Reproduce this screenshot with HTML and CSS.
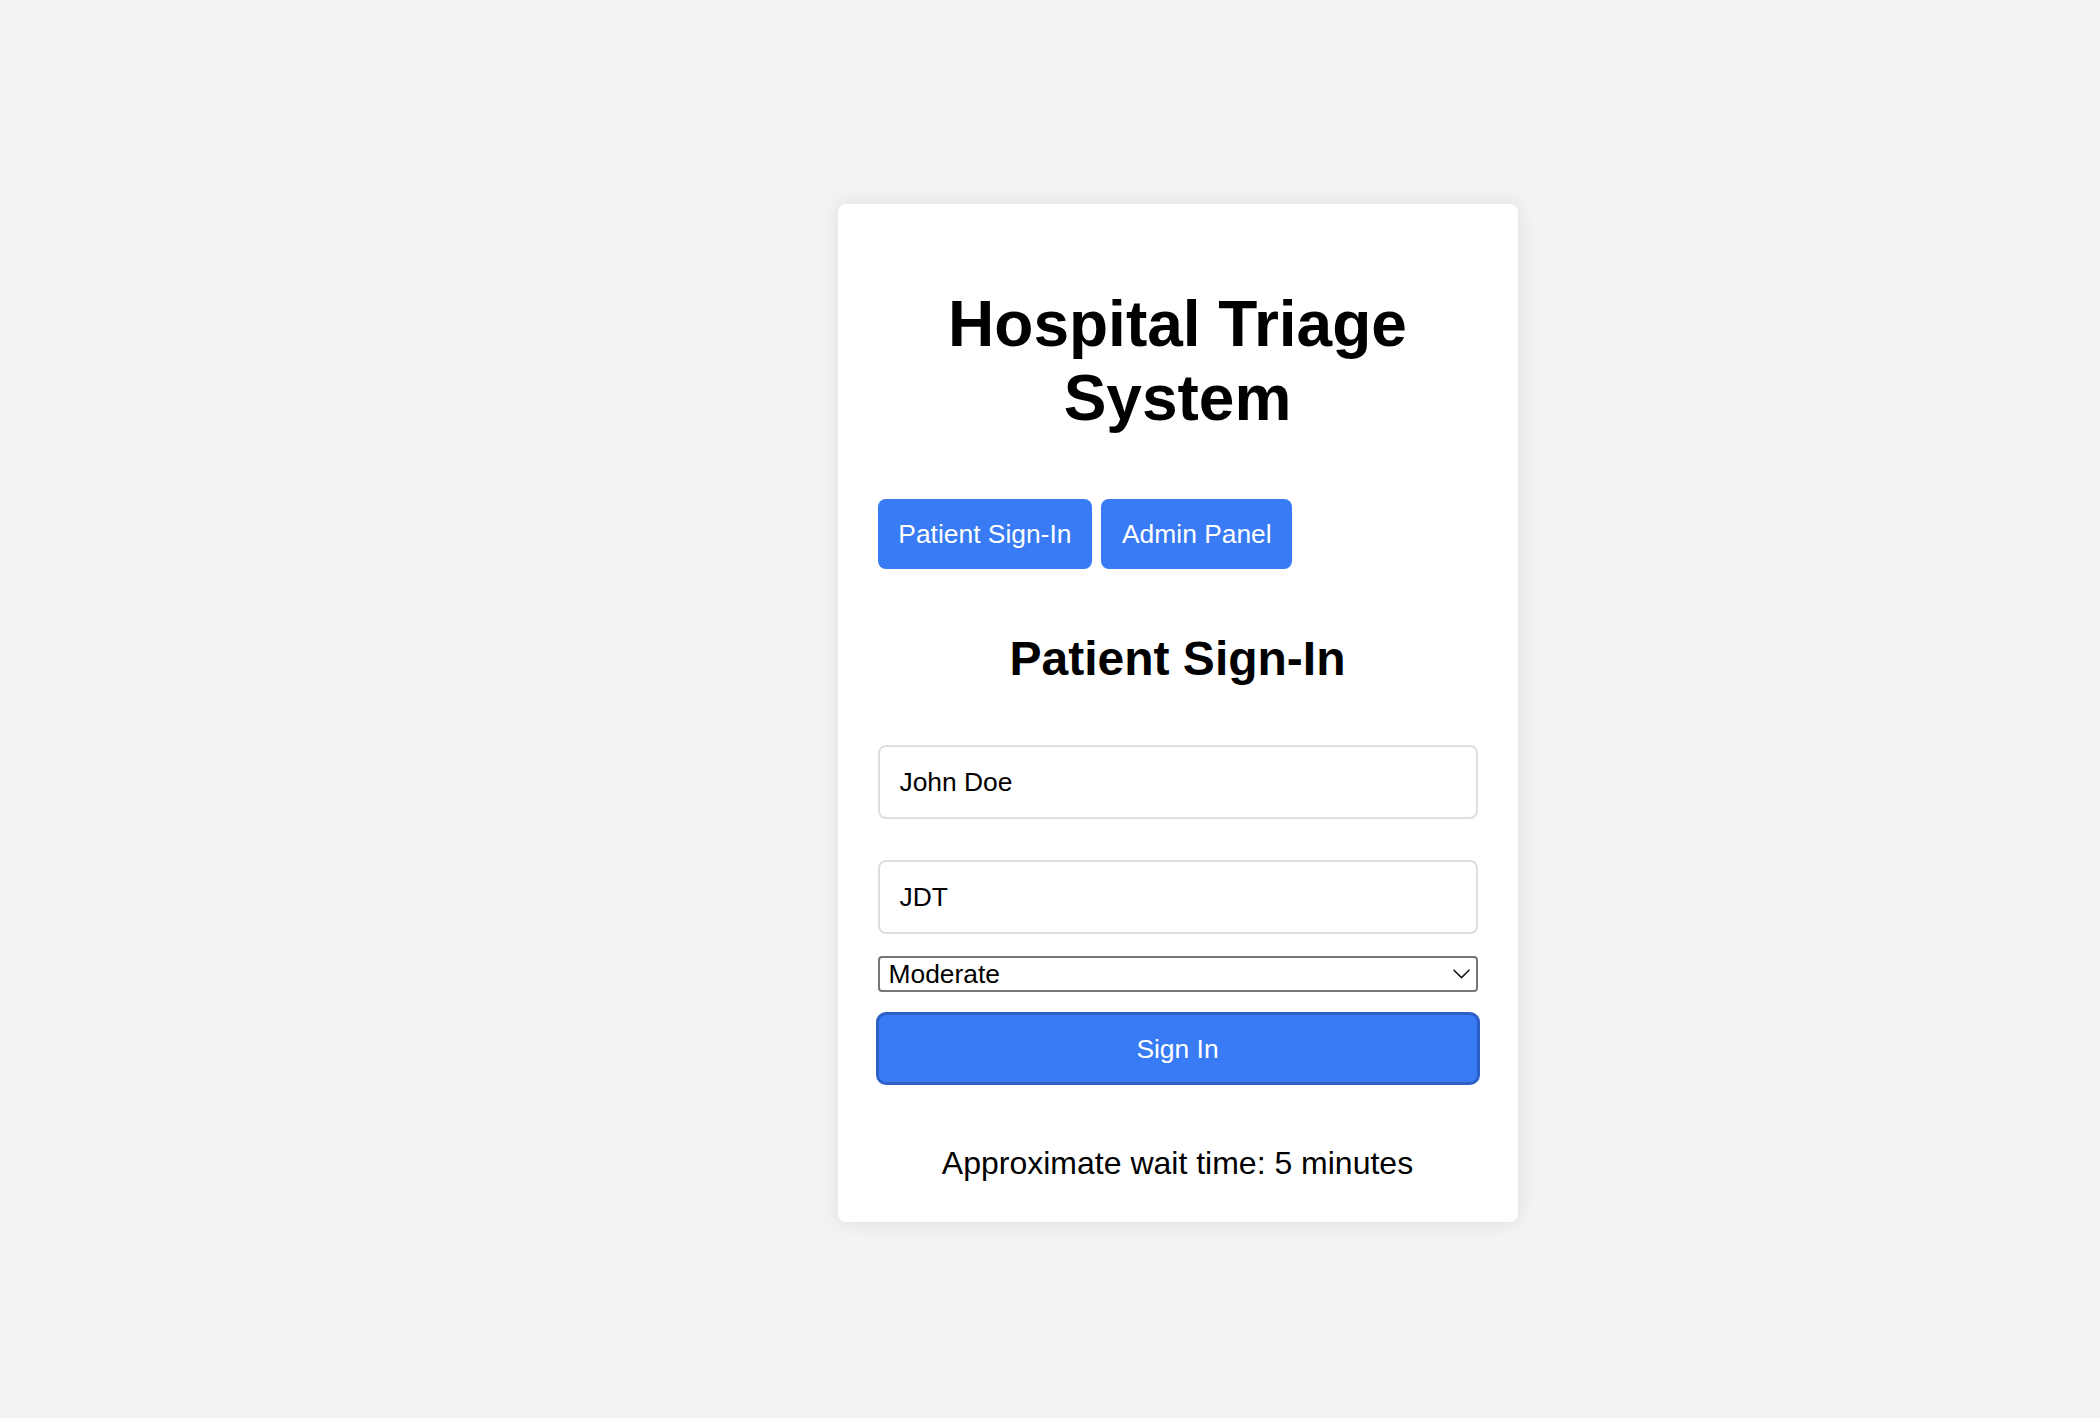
FILE: index.html
```html
<!DOCTYPE html>
<html lang="en">
<head>
<meta charset="utf-8">
<title>Hospital Triage System</title>
<link rel="stylesheet" href="styles.css">
</head>
<body>
<main class="page">
  <div class="card">
    <h1 class="title">Hospital Triage System</h1>
    <nav class="tabs">
      <button class="tab" type="button">Patient Sign-In</button>
      <button class="tab" type="button">Admin Panel</button>
    </nav>
    <h2 class="section-title">Patient Sign-In</h2>
    <form class="form">
      <input class="field" type="text" value="John Doe">
      <input class="field field-second" type="text" value="JDT">
      <div class="select-wrap">
        <select class="select">
          <option>Moderate</option>
        </select>
        <svg class="chevron" width="17" height="10" viewBox="0 0 17 10" aria-hidden="true">
          <path d="M1 1.2 L8.5 8.6 L16 1.2" fill="none" stroke="#1a1a1a" stroke-width="1.6" stroke-linecap="round" stroke-linejoin="round"/>
        </svg>
      </div>
      <button class="submit" type="button">Sign In</button>
    </form>
    <p class="wait">Approximate wait time: 5 minutes</p>
  </div>
</main>
</body>
</html>
```

FILE: styles.css
```css
* {
  box-sizing: border-box;
}

html, body {
  margin: 0;
  padding: 0;
}

body {
  background: #f3f3f3;
  font-family: "Liberation Sans", Arial, Helvetica, sans-serif;
  color: #000;
  min-height: 1418px;
}

.page {
  display: flex;
  justify-content: center;
  align-items: flex-start;
  padding: 204px 0 0 255px;
}

.card {
  width: 680px;
  background: #fff;
  border-radius: 8px;
  box-shadow: 0 0 20px rgba(0, 0, 0, 0.09);
  padding: 0 40px 40px;
  display: flex;
  flex-direction: column;
}

.title {
  margin: 84px 0 0;
  font-size: 64px;
  line-height: 73.6px;
  font-weight: 700;
  text-align: center;
}

.tabs {
  display: flex;
  gap: 9px;
  margin-top: 64px;
}

.tab {
  height: 70px;
  padding: 0 20.8px;
  border: none;
  border-radius: 8px;
  background: #387bf5;
  color: #fff;
  font-family: inherit;
  font-size: 26.4px;
  line-height: 30px;
}

.section-title {
  margin: 62px 0 0;
  font-size: 48px;
  line-height: 55px;
  font-weight: 700;
  text-align: center;
}

.form {
  display: flex;
  flex-direction: column;
  margin-top: 59px;
}

.field {
  height: 74px;
  width: 100%;
  border: 2px solid #dedede;
  border-radius: 8px;
  padding: 0 20px;
  font-family: inherit;
  font-size: 26.4px;
  color: #000;
  background: #fff;
  outline: none;
}

.field-second {
  margin-top: 41px;
}

.select-wrap {
  position: relative;
  margin-top: 22px;
}

.select {
  display: block;
  width: 100%;
  height: 36px;
  border: 2px solid #767676;
  border-radius: 4px;
  padding: 0 40px 0 9px;
  font-family: inherit;
  font-size: 26.4px;
  line-height: 32px;
  color: #000;
  background: #fff;
  -webkit-appearance: none;
  appearance: none;
}

.chevron {
  position: absolute;
  right: 8px;
  top: 13px;
  pointer-events: none;
}

.submit {
  margin: 20px -2px 0;
  height: 73px;
  border: 3px solid #2c60c8;
  border-radius: 10px;
  background: #387bf5;
  color: #fff;
  font-family: inherit;
  font-size: 26.4px;
  line-height: 30px;
}

.wait {
  margin: 60px 0 0;
  font-size: 32px;
  line-height: 37px;
  text-align: center;
}
```
